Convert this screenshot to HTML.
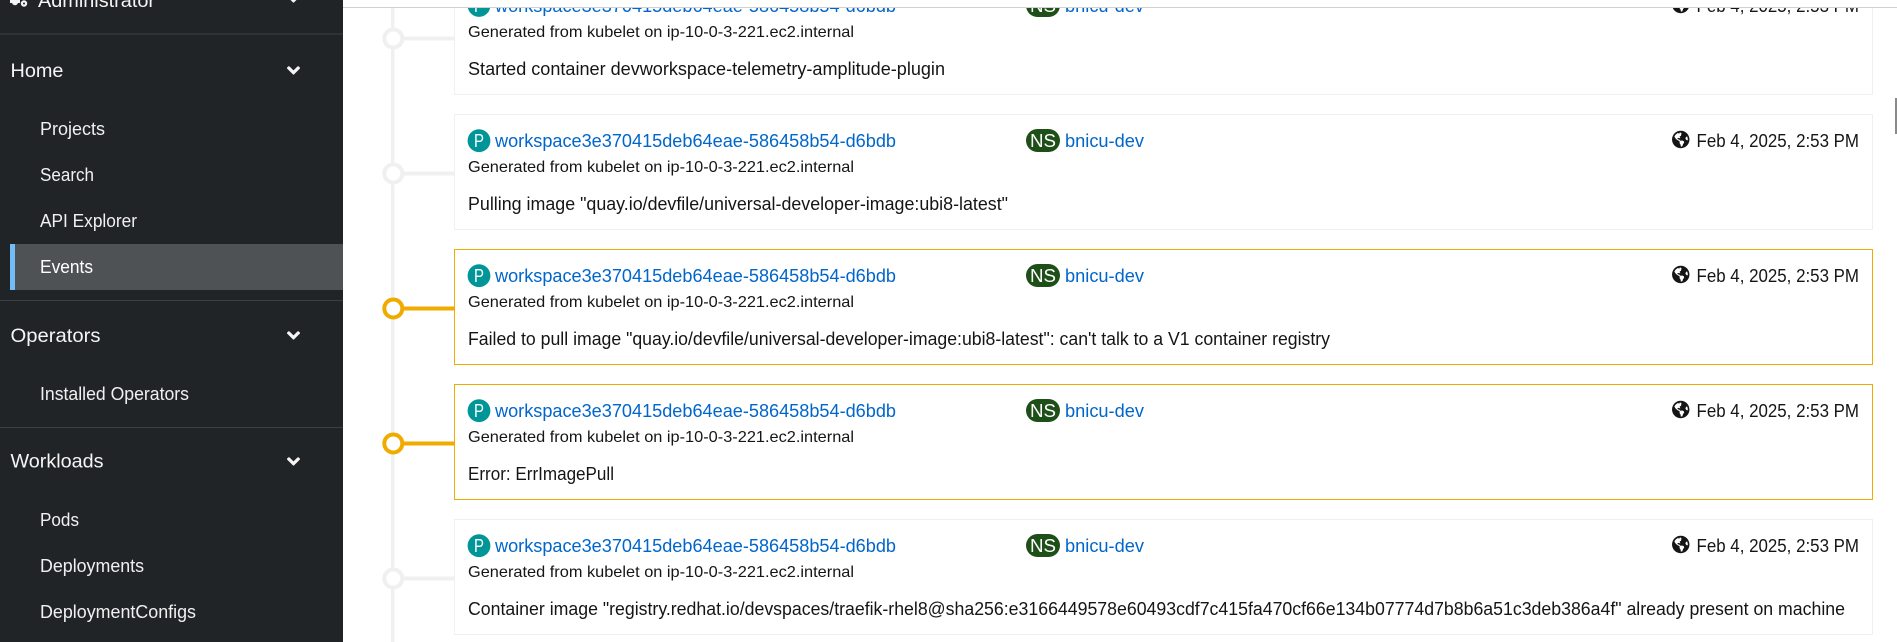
<!DOCTYPE html>
<html lang="en">
<head>
<meta charset="utf-8">
<title>Events</title>
<style>
html,body{margin:0;padding:0;width:1897px;height:642px;overflow:hidden;background:#fff}
svg{display:block;font-family:"Liberation Sans",sans-serif}
.nav{fill:#f0f0f0;font-size:18px}
.sec{fill:#f5f5f5;font-size:19.5px}
.lnk{fill:#0066cc;font-size:18.5px}
.gen{fill:#151515;font-size:15.8px}
.msg{fill:#151515;font-size:18px}
.dat{fill:#151515;font-size:18px}
.bdg{fill:#fff;font-size:18px}
</style>
</head>
<body>
<svg width="1897" height="642" viewBox="0 0 1897 642" xmlns="http://www.w3.org/2000/svg">
<defs>
<symbol id="chev" viewBox="0 0 320 512"><path fill="#f5f5f5" d="M143 352.3L7 216.3c-9.4-9.4-9.4-24.6 0-33.9l22.6-22.6c9.4-9.4 24.6-9.4 33.9 0l96.4 96.4 96.4-96.4c9.4-9.4 24.6-9.4 33.9 0l22.6 22.6c9.4 9.4 9.4 24.6 0 33.9l-136 136c-9.2 9.4-24.4 9.4-33.8 0z"/></symbol>
<symbol id="globe" viewBox="0 0 496 512"><path fill="#151515" d="M248 8C111.03 8 0 119.03 0 256s111.03 248 248 248 248-111.03 248-248S384.97 8 248 8zm82.29 357.6c-3.9 3.88-7.99 7.95-11.31 11.28-2.99 3-5.1 6.7-6.17 10.71-1.51 5.66-2.73 11.38-4.77 16.87l-17.39 46.85c-13.76 3-28 4.69-42.65 4.69v-27.38c1.69-12.62-7.64-36.26-22.63-51.25-6-6-9.37-14.14-9.37-22.63v-32.01c0-11.64-6.27-22.34-16.46-27.97-14.37-7.95-34.81-19.06-48.81-26.11-11.48-5.78-22.1-13.14-31.65-21.75l-.8-.72a114.792 114.792 0 0 1-18.06-20.74c-9.38-13.77-24.66-36.42-34.59-51.14 20.47-45.5 57.36-82.04 103.2-101.89l24.01 12.01C203.48 89.74 216 82.01 216 70.11v-11.3c7.99-1.29 16.12-2.11 24.44-2.43l28.3 28.3c6.25 6.25 6.25 16.38 0 22.63L264 112l-10.34 10.34c-3.12 3.12-3.12 8.19 0 11.31l4.69 4.69c3.12 3.12 3.12 8.19 0 11.31l-8 8a8.008 8.008 0 0 1-5.66 2.34h-8.99c-2.08 0-4.08.81-5.58 2.27l-9.92 9.65a8.008 8.008 0 0 0-1.58 9.31l15.59 31.19c2.66 5.32-1.21 11.58-7.15 11.58h-5.64c-1.93 0-3.79-.7-5.24-1.96l-9.28-8.06a16.017 16.017 0 0 0-15.55-3.1l-31.17 10.39a11.95 11.95 0 0 0-8.17 11.34c0 4.53 2.56 8.66 6.61 10.69l11.08 5.54c9.41 4.71 19.79 7.16 30.31 7.16s22.59 27.29 32 32h66.75c8.49 0 16.62 3.37 22.63 9.37l13.69 13.69a30.503 30.503 0 0 1 8.93 21.57 46.536 46.536 0 0 1-13.72 32.98zM417 274.25c-5.79-1.45-10.84-5-14.15-9.97l-17.98-26.97a23.97 23.97 0 0 1 0-26.62l19.59-29.38c2.32-3.47 5.5-6.28 9.24-8.14l12.98-6.49C440.2 193.59 448 223.87 448 256c0 8.67-.74 17.16-1.82 25.54L417 274.25z"/></symbol>
</defs>

<!-- Sidebar -->
<rect x="0" y="0" width="343" height="642" fill="#212427"/>
<g fill="#f5f5f5">
  <rect x="10" y="0" width="10" height="3"/><circle cx="15" cy="2" r="3.2"/>
  <circle cx="24" cy="3.5" r="3.2"/>
</g>
<circle cx="24" cy="3.5" r="1" fill="#212427"/>
<text class="sec" x="38" y="7" textLength="117" lengthAdjust="spacingAndGlyphs">Administrator</text>
<use href="#chev" x="287" y="-12" width="13" height="20.8"/>
<rect x="0" y="33.5" width="343" height="1" fill="#3c3f42"/>

<text class="sec" x="10.5" y="77" textLength="53" lengthAdjust="spacingAndGlyphs">Home</text>
<use href="#chev" x="287" y="60" width="13" height="20.8"/>
<text class="nav" x="40" y="135" textLength="65" lengthAdjust="spacingAndGlyphs">Projects</text>
<text class="nav" x="40" y="181" textLength="54" lengthAdjust="spacingAndGlyphs">Search</text>
<text class="nav" x="40" y="227" textLength="97" lengthAdjust="spacingAndGlyphs">API Explorer</text>
<rect x="10" y="244" width="333" height="46" fill="#4f5255"/>
<rect x="10" y="244" width="5" height="46" fill="#73bcf7"/>
<text class="nav" x="40" y="273" textLength="53" lengthAdjust="spacingAndGlyphs" style="fill:#fff">Events</text>
<rect x="0" y="300" width="343" height="1" fill="#3c3f42"/>

<text class="sec" x="10.5" y="342" textLength="90" lengthAdjust="spacingAndGlyphs">Operators</text>
<use href="#chev" x="287" y="325" width="13" height="20.8"/>
<text class="nav" x="40" y="400" textLength="149" lengthAdjust="spacingAndGlyphs">Installed Operators</text>
<rect x="0" y="427" width="343" height="1" fill="#3c3f42"/>

<text class="sec" x="10.5" y="467.5" textLength="93" lengthAdjust="spacingAndGlyphs">Workloads</text>
<use href="#chev" x="287" y="451" width="13" height="20.8"/>
<text class="nav" x="40" y="526" textLength="39" lengthAdjust="spacingAndGlyphs">Pods</text>
<text class="nav" x="40" y="572" textLength="104" lengthAdjust="spacingAndGlyphs">Deployments</text>
<text class="nav" x="40" y="618" textLength="156" lengthAdjust="spacingAndGlyphs">DeploymentConfigs</text>

<!-- Timeline -->
<rect x="391" y="0" width="3.5" height="642" fill="#f0f0f0"/>

<!-- Card 1 -->
<rect x="404" y="36.5" width="50" height="4" fill="#f0f0f0"/>
<circle cx="393.3" cy="38.5" r="9" fill="#fff" stroke="#f0f0f0" stroke-width="4"/>
<rect x="454.5" y="-21" width="1418" height="115.5" fill="#fff" stroke="#f0f0f0"/>
<circle cx="479" cy="5.5" r="11.4" fill="#009596"/>
<text class="bdg" x="474" y="12" textLength="10" lengthAdjust="spacingAndGlyphs">P</text>
<text class="lnk" x="495" y="12" textLength="401" lengthAdjust="spacingAndGlyphs">workspace3e370415deb64eae-586458b54-d6bdb</text>
<rect x="1026" y="-6" width="34" height="23" rx="11.5" fill="#1e4f18"/>
<text class="bdg" x="1030" y="12" textLength="26" lengthAdjust="spacingAndGlyphs">NS</text>
<text class="lnk" x="1065" y="12" textLength="79" lengthAdjust="spacingAndGlyphs">bnicu-dev</text>
<use href="#globe" x="1672" y="-4.5" width="17.5" height="18"/>
<text class="dat" x="1696.5" y="12" textLength="162.5" lengthAdjust="spacingAndGlyphs">Feb 4, 2025, 2:53 PM</text>
<text class="gen" x="468" y="37" textLength="386" lengthAdjust="spacingAndGlyphs">Generated from kubelet on ip-10-0-3-221.ec2.internal</text>
<text class="msg" x="468" y="75" textLength="477" lengthAdjust="spacingAndGlyphs">Started container devworkspace-telemetry-amplitude-plugin</text>

<!-- Card 2 -->
<rect x="404" y="171.5" width="50" height="4" fill="#f0f0f0"/>
<circle cx="393.3" cy="173.5" r="9" fill="#fff" stroke="#f0f0f0" stroke-width="4"/>
<rect x="454.5" y="114.5" width="1418" height="115" fill="#fff" stroke="#f0f0f0"/>
<circle cx="479" cy="140.7" r="11.4" fill="#009596"/>
<text class="bdg" x="474" y="147" textLength="10" lengthAdjust="spacingAndGlyphs">P</text>
<text class="lnk" x="495" y="147" textLength="401" lengthAdjust="spacingAndGlyphs">workspace3e370415deb64eae-586458b54-d6bdb</text>
<rect x="1026" y="129" width="34" height="23" rx="11.5" fill="#1e4f18"/>
<text class="bdg" x="1030" y="147" textLength="26" lengthAdjust="spacingAndGlyphs">NS</text>
<text class="lnk" x="1065" y="147" textLength="79" lengthAdjust="spacingAndGlyphs">bnicu-dev</text>
<use href="#globe" x="1672" y="130.5" width="17.5" height="18"/>
<text class="dat" x="1696.5" y="147" textLength="162.5" lengthAdjust="spacingAndGlyphs">Feb 4, 2025, 2:53 PM</text>
<text class="gen" x="468" y="172" textLength="386" lengthAdjust="spacingAndGlyphs">Generated from kubelet on ip-10-0-3-221.ec2.internal</text>
<text class="msg" x="468" y="210" textLength="540" lengthAdjust="spacingAndGlyphs">Pulling image "quay.io/devfile/universal-developer-image:ubi8-latest"</text>

<!-- Card 3 -->
<rect x="404" y="306.5" width="50" height="4" fill="#f0ab00"/>
<circle cx="393.3" cy="308.5" r="9" fill="#fff" stroke="#f0ab00" stroke-width="4"/>
<rect x="454.5" y="249.5" width="1418" height="115" fill="#fff" stroke="#f0ab00"/>
<circle cx="479" cy="275.7" r="11.4" fill="#009596"/>
<text class="bdg" x="474" y="282" textLength="10" lengthAdjust="spacingAndGlyphs">P</text>
<text class="lnk" x="495" y="282" textLength="401" lengthAdjust="spacingAndGlyphs">workspace3e370415deb64eae-586458b54-d6bdb</text>
<rect x="1026" y="264" width="34" height="23" rx="11.5" fill="#1e4f18"/>
<text class="bdg" x="1030" y="282" textLength="26" lengthAdjust="spacingAndGlyphs">NS</text>
<text class="lnk" x="1065" y="282" textLength="79" lengthAdjust="spacingAndGlyphs">bnicu-dev</text>
<use href="#globe" x="1672" y="265.5" width="17.5" height="18"/>
<text class="dat" x="1696.5" y="282" textLength="162.5" lengthAdjust="spacingAndGlyphs">Feb 4, 2025, 2:53 PM</text>
<text class="gen" x="468" y="307" textLength="386" lengthAdjust="spacingAndGlyphs">Generated from kubelet on ip-10-0-3-221.ec2.internal</text>
<text class="msg" x="468" y="345" textLength="862" lengthAdjust="spacingAndGlyphs">Failed to pull image "quay.io/devfile/universal-developer-image:ubi8-latest": can't talk to a V1 container registry</text>

<!-- Card 4 -->
<rect x="404" y="441.5" width="50" height="4" fill="#f0ab00"/>
<circle cx="393.3" cy="443.5" r="9" fill="#fff" stroke="#f0ab00" stroke-width="4"/>
<rect x="454.5" y="384.5" width="1418" height="115" fill="#fff" stroke="#f0ab00"/>
<circle cx="479" cy="410.7" r="11.4" fill="#009596"/>
<text class="bdg" x="474" y="417" textLength="10" lengthAdjust="spacingAndGlyphs">P</text>
<text class="lnk" x="495" y="417" textLength="401" lengthAdjust="spacingAndGlyphs">workspace3e370415deb64eae-586458b54-d6bdb</text>
<rect x="1026" y="399" width="34" height="23" rx="11.5" fill="#1e4f18"/>
<text class="bdg" x="1030" y="417" textLength="26" lengthAdjust="spacingAndGlyphs">NS</text>
<text class="lnk" x="1065" y="417" textLength="79" lengthAdjust="spacingAndGlyphs">bnicu-dev</text>
<use href="#globe" x="1672" y="400.5" width="17.5" height="18"/>
<text class="dat" x="1696.5" y="417" textLength="162.5" lengthAdjust="spacingAndGlyphs">Feb 4, 2025, 2:53 PM</text>
<text class="gen" x="468" y="442" textLength="386" lengthAdjust="spacingAndGlyphs">Generated from kubelet on ip-10-0-3-221.ec2.internal</text>
<text class="msg" x="468" y="480" textLength="146" lengthAdjust="spacingAndGlyphs">Error: ErrImagePull</text>

<!-- Card 5 -->
<rect x="404" y="576.5" width="50" height="4" fill="#f0f0f0"/>
<circle cx="393.3" cy="578.5" r="9" fill="#fff" stroke="#f0f0f0" stroke-width="4"/>
<rect x="454.5" y="519.5" width="1418" height="115" fill="#fff" stroke="#f0f0f0"/>
<circle cx="479" cy="545.7" r="11.4" fill="#009596"/>
<text class="bdg" x="474" y="552" textLength="10" lengthAdjust="spacingAndGlyphs">P</text>
<text class="lnk" x="495" y="552" textLength="401" lengthAdjust="spacingAndGlyphs">workspace3e370415deb64eae-586458b54-d6bdb</text>
<rect x="1026" y="534" width="34" height="23" rx="11.5" fill="#1e4f18"/>
<text class="bdg" x="1030" y="552" textLength="26" lengthAdjust="spacingAndGlyphs">NS</text>
<text class="lnk" x="1065" y="552" textLength="79" lengthAdjust="spacingAndGlyphs">bnicu-dev</text>
<use href="#globe" x="1672" y="535.5" width="17.5" height="18"/>
<text class="dat" x="1696.5" y="552" textLength="162.5" lengthAdjust="spacingAndGlyphs">Feb 4, 2025, 2:53 PM</text>
<text class="gen" x="468" y="577" textLength="386" lengthAdjust="spacingAndGlyphs">Generated from kubelet on ip-10-0-3-221.ec2.internal</text>
<text class="msg" x="468" y="615" textLength="1377" lengthAdjust="spacingAndGlyphs">Container image "registry.redhat.io/devspaces/traefik-rhel8@sha256:e3166449578e60493cdf7c415fa470cf66e134b07774d7b8b6a51c3deb386a4f" already present on machine</text>

<!-- Top toolbar edge and scrollbar -->
<rect x="343" y="0" width="1554" height="7" fill="#fff"/>
<rect x="343" y="7" width="1554" height="1" fill="#d2d2d2"/>
<rect x="1895" y="98" width="2" height="36" fill="#8a8a8a"/>
</svg>
</body>
</html>
